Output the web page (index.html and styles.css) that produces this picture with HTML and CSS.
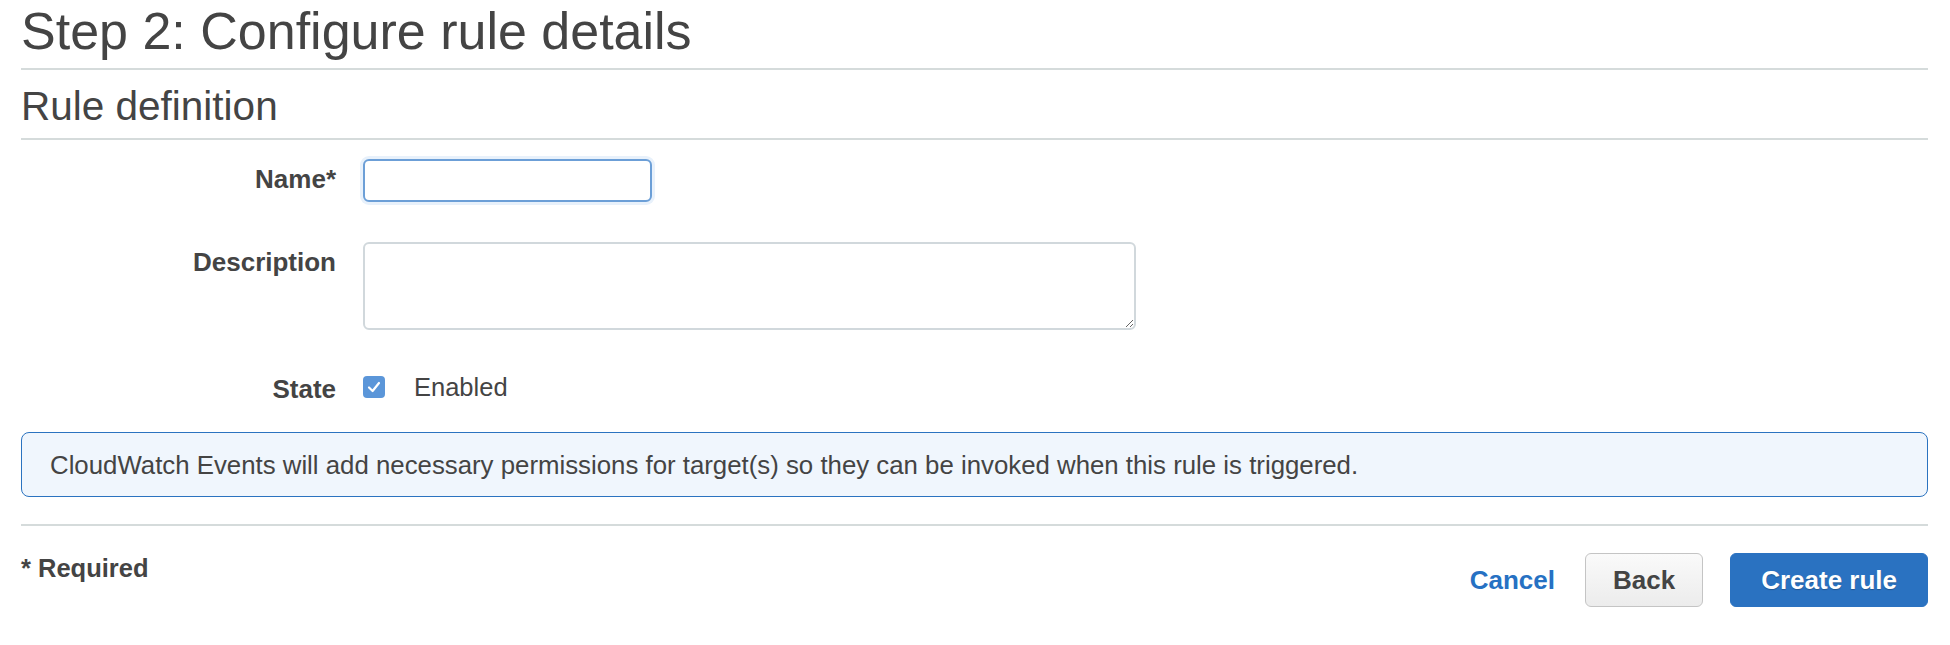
FILE: index.html
```html
<!DOCTYPE html>
<html lang="en">
<head>
<meta charset="utf-8">
<title>Step 2: Configure rule details</title>
<link rel="stylesheet" href="styles.css">
</head>
<body>
<div class="page">
  <h1 class="page-title">Step 2: Configure rule details</h1>
  <h2 class="section-title">Rule definition</h2>

  <div class="form">
    <div class="row row-name">
      <label class="label" for="name">Name*</label>
      <div class="control"><input id="name" class="input input-focus" type="text"></div>
    </div>
    <div class="row row-desc">
      <label class="label" for="desc">Description</label>
      <div class="control"><textarea id="desc" class="textarea"></textarea></div>
    </div>
    <div class="row row-state">
      <span class="label">State</span>
      <div class="control check-line">
        <span class="checkbox">
          <svg viewBox="0 0 22 22" width="22" height="22"><path d="M6 11.5 L9.6 15 L16 7" fill="none" stroke="#fff" stroke-width="2.2" stroke-linecap="round" stroke-linejoin="round"/></svg>
        </span>
        <span class="check-text">Enabled</span>
      </div>
    </div>
  </div>

  <div class="info">CloudWatch Events will add necessary permissions for target(s) so they can be invoked when this rule is triggered.</div>

  <div class="footer">
    <div class="required">* Required</div>
    <div class="actions">
      <a class="link-cancel" href="#">Cancel</a>
      <button class="btn btn-back" type="button">Back</button>
      <button class="btn btn-primary" type="button">Create rule</button>
    </div>
  </div>
</div>
</body>
</html>
```

FILE: styles.css
```css
html, body {
  margin: 0;
  padding: 0;
  background: #ffffff;
}

body {
  font-family: "Liberation Sans", Arial, Helvetica, sans-serif;
  color: #444444;
}

.page {
  padding: 0 22px 0 21px;
}

.page-title {
  margin: 0;
  padding: 2px 0 8px 0;
  font-size: 52px;
  line-height: 58px;
  font-weight: 400;
  color: #444444;
  border-bottom: 2px solid #d5dbdb;
}

.section-title {
  margin: 13px 0 0 0;
  padding: 0 0 9px 0;
  font-size: 40.5px;
  line-height: 46px;
  font-weight: 400;
  color: #444444;
  border-bottom: 2px solid #d5dbdb;
}

.form {
  display: flex;
  flex-direction: column;
  padding-top: 19px;
}

.row {
  display: grid;
  grid-template-columns: 315px 1fr;
  column-gap: 27px;
  align-items: start;
}

.row-desc {
  margin-top: 40px;
}

.row-state {
  margin-top: 44px;
}

.label {
  display: block;
  text-align: right;
  font-size: 26px;
  line-height: 30px;
  font-weight: 700;
  color: #444444;
  padding-top: 5px;
}

.row-state .label {
  padding-top: 0;
}

.control {
  display: flex;
}

.input {
  box-sizing: border-box;
  width: 289px;
  height: 43px;
  border: 2px solid #c7cfd4;
  border-radius: 6px;
  background: #fff;
  font-family: inherit;
  font-size: 22px;
  padding: 0 10px;
  margin: 0;
  outline: none;
}

.input-focus {
  border-color: #6c9fd7;
  box-shadow: 0 0 0 3px #e8f1fb;
}

.textarea {
  box-sizing: border-box;
  width: 773px;
  height: 88px;
  border: 2px solid #d1d8dc;
  border-radius: 6px;
  background: #fff;
  font-family: inherit;
  font-size: 22px;
  padding: 6px 10px;
  margin: 0;
  outline: none;
  resize: both;
}

.check-line {
  align-items: center;
  height: 30px;
  gap: 29px;
}

.checkbox {
  display: flex;
  align-items: center;
  justify-content: center;
  width: 22px;
  height: 22px;
  border-radius: 4px;
  background: #5b96d9;
  margin-top: -4px;
}

.check-text {
  font-size: 25.5px;
  line-height: 30px;
  color: #444444;
  margin-top: -4px;
}

.info {
  margin-top: 28px;
  border: 1.5px solid #2b73c0;
  border-radius: 8px;
  background: #f0f6fd;
  padding: 17px 28px 16px 28px;
  font-size: 25.8px;
  line-height: 30px;
  color: #444444;
}

.footer {
  margin-top: 27px;
  border-top: 2px solid #d5dbdb;
  padding-top: 27px;
  display: flex;
  justify-content: space-between;
  align-items: flex-start;
}

.required {
  font-size: 25.5px;
  line-height: 30px;
  font-weight: 700;
  color: #444444;
}

.actions {
  display: flex;
  align-items: center;
}

.link-cancel {
  font-size: 26px;
  font-weight: 700;
  color: #2671c3;
  text-decoration: none;
  margin-right: 30px;
}

.btn {
  box-sizing: border-box;
  height: 54px;
  border-radius: 6px;
  font-family: inherit;
  font-size: 26px;
  font-weight: 700;
  cursor: pointer;
  margin: 0;
}

.btn-back {
  padding: 0 27px;
  color: #444444;
  border: 1.5px solid #c4c4c4;
  background: linear-gradient(to bottom, #fafafa 0%, #ececec 100%);
  margin-right: 27px;
}

.btn-primary {
  padding: 0 30px;
  color: #ffffff;
  border: 1px solid #2a72c1;
  background: #2a72c1;
  text-shadow: 0 1px 1px rgba(0, 0, 0, 0.25);
}
```
